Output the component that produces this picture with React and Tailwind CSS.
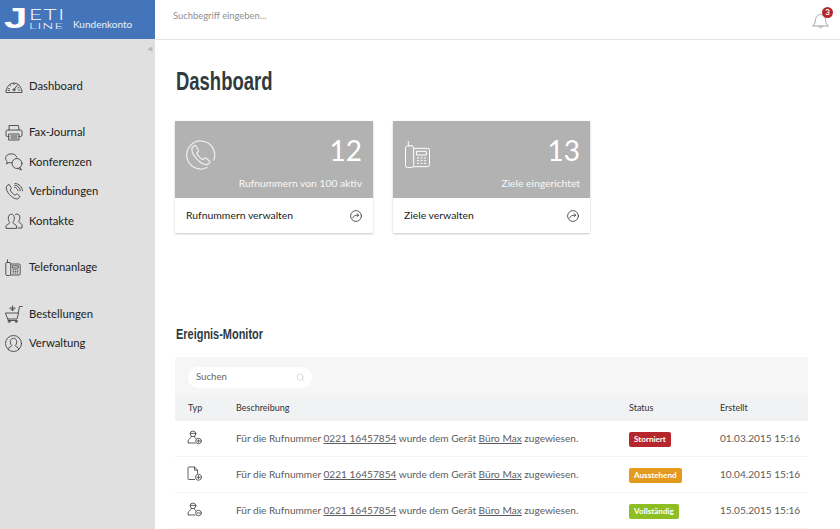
import { Search } from "lucide-react";

const Gauge = () => (
  <svg width="18" height="15" viewBox="0 0 18 15" fill="none" stroke="#444" strokeWidth="0.9" strokeLinecap="round" strokeLinejoin="round">
    <path d="M1.500 11.500a7.500 7.500 0 0 1 15 0" />
    <path d="M1 11.500v2h16v-2" />
    <path d="M9 10.500l3.500-4.500" />
    <path d="M3.500 9.500l1 .4M5 6l.8.7M9 4.500v1M13.800 8.500l-1 .5M14.500 11h-1M3.400 11.500h1" />
    <circle cx="9" cy="10.800" r="1" />
  </svg>
);

const Printer = () => (
  <svg width="18" height="17" viewBox="0 0 18 17" fill="none" stroke="#444" strokeWidth="0.9" strokeLinecap="round" strokeLinejoin="round">
    <path d="M4 6V1.500h9.500L14 6" />
    <path d="M4 12.500H2.500A1.500 1.500 0 0 1 1 11V7.500A1.500 1.500 0 0 1 2.500 6h13A1.500 1.500 0 0 1 17 7.500V11a1.500 1.500 0 0 1-1.500 1.500H14" />
    <path d="M4 10h10v6H4z" />
    <path d="M6 12h6M6 14h6" strokeWidth="1.200" />
  </svg>
);

const Bubbles = () => (
  <svg width="18" height="18" viewBox="0 0 18 18" fill="none" stroke="#444" strokeWidth="0.9" strokeLinecap="round" strokeLinejoin="round">
    <path d="M7 9.500c-1 .3-2 .3-3 0L1.500 11l.7-2.500C1 7.500.6 6.300.6 5.200.6 2.800 3 .8 6.200.8c2.700 0 4.900 1.300 5.600 3.300" />
    <circle cx="12" cy="10.500" r="5" />
    <path d="M15 14.500l1.500 2.500-3-1.200" />
  </svg>
);

const PhoneWaves = () => (
  <svg width="18" height="18" viewBox="0 0 18 18" fill="none" stroke="#444" strokeWidth="0.9" strokeLinecap="round" strokeLinejoin="round">
    <path d="M3.200 1.800L1.500 3.300c-.8 2 .3 5.300 3 8.300 2.800 3 5.900 4.700 8.300 4.300l1.800-1.700c.4-.4.3-.9 0-1.200l-2.200-1.800c-.4-.3-.8-.3-1.200 0l-1.100 1c-1.400-.4-4.400-3.400-5-5.200l1-1.200c.3-.3.3-.8 0-1.200L4.400 1.800c-.3-.4-.8-.4-1.200 0z" />
    <path d="M9.500 4.200c1.800.2 3.300 1.700 3.500 3.500M9.800 2.200c3 .2 5.300 2.600 5.500 5.500M10 .4c4 .2 7.200 3.400 7.500 7.300" />
  </svg>
);

const Contacts = () => (
  <svg width="18" height="16" viewBox="0 0 18 16" fill="none" stroke="#444" strokeWidth="0.9" strokeLinecap="round" strokeLinejoin="round">
    <path d="M1 15v-2c0-1.300 3.500-2 3.800-3.300C3.800 8.500 3.300 7.300 3.300 5c0-2.400 1.300-3.800 3-3.800s3 1.400 3 3.800c0 2.300-.5 3.500-1.500 4.700.3 1.300 3.700 2 3.700 3.300v2z" />
    <path d="M10.500 1.500c.5-.3 1-.5 1.500-.5 1.700 0 2.800 1.300 2.800 3.500 0 2-.5 3.200-1.300 4.200.3 1.200 3.500 1.800 3.500 3V15h-4" />
  </svg>
);

const DeskPhone = ({ w = 16, h = 18, color = "#444", sw = 0.9 }) => (
  <svg width={w} height={h} viewBox="0 0 16 18" fill="none" stroke={color} strokeWidth={sw} strokeLinecap="round" strokeLinejoin="round">
    <path d="M2.500 3.500V.8" />
    <path d="M4.500 3.500H2A1.200 1.200 0 0 0 .8 4.700v10.600A1.200 1.200 0 0 0 2 16.500h2.500A1.200 1.200 0 0 0 5.700 15.300V4.700a1.200 1.200 0 0 0-1.200-1.200z" />
    <path d="M5.700 5h8.300a1.200 1.200 0 0 1 1.200 1.200v8.600a1.200 1.200 0 0 1-1.200 1.200H5.700" />
    <path d="M7.700 6.800h5.600v2.200H7.700z" />
    <path d="M8 10.800h.7M10.100 10.800h.7M12.200 10.800h.7M8 12.400h.7M10.100 12.400h.7M12.200 12.400h.7M8 14h.7M10.100 14h.7M12.200 14h.7" />
  </svg>
);

const Cart = () => (
  <svg width="18" height="18" viewBox="0 0 18 18" fill="none" stroke="#444" strokeWidth="0.9" strokeLinecap="round" strokeLinejoin="round">
    <path d="M.8 8h12.700l-1.500 6H3z" />
    <path d="M13.300 8l1.200-6.500h2.800" />
    <path d="M7.500 1v4.500M5.500 3.800l2 2 2-2M5 3h5" />
    <path d="M3 14v1.500h9" />
    <circle cx="4.200" cy="16.500" r="1" />
    <circle cx="11.300" cy="16.500" r="1" />
  </svg>
);

const UserCircle = () => (
  <svg width="17" height="17" viewBox="0 0 17 17" fill="none" stroke="#444" strokeWidth="0.9" strokeLinecap="round" strokeLinejoin="round">
    <circle cx="8.500" cy="8.500" r="8" />
    <path d="M3.500 14.800v-1.300c0-1.200 3-1.800 3.300-2.800-1-1-1.500-2.200-1.500-4 0-2 1.300-3.400 3.200-3.400s3.200 1.400 3.200 3.400c0 1.800-.5 3-1.500 4 .3 1 3.300 1.600 3.300 2.800v1.300" />
  </svg>
);

const PhoneRound = () => (
  <svg width="30" height="30" viewBox="0 0 30 30" fill="none" stroke="#eee" strokeWidth="1.200" strokeLinecap="round" strokeLinejoin="round">
    <path d="M21 27.500A14 14 0 1 1 27.800 20" />
    <g transform="translate(-3.500 -3.500) scale(1.230)">
      <path d="M9.500 7.500L7.800 9c-.6 2 .3 5.200 3.500 9 3.400 3.700 6.600 5.300 9 4.800l1.600-1.600c.4-.4.4-1 0-1.300l-2.700-2.200c-.4-.3-.9-.3-1.300 0l-1.300 1.200c-1.500-.6-4.400-3.700-5-5.300l1.200-1.300c.3-.4.3-.9 0-1.300L10.800 7.500c-.4-.4-.9-.4-1.300 0z" strokeWidth="1" />
    </g>
  </svg>
);

const ArrowCircle = () => (
  <svg width="12" height="12" viewBox="0 0 12 12" fill="none" stroke="#333" strokeWidth="0.8" strokeLinecap="round" strokeLinejoin="round">
    <circle cx="6" cy="6" r="5.400" />
    <path d="M2.800 8c.3-1.800 1.500-2.800 5.700-2.800" />
    <path d="M7 3.700l1.800 1.500L7 6.700" />
  </svg>
);

const Bell = () => (
  <svg width="17" height="16" viewBox="0 0 17 16" fill="none" stroke="#9a9a9a" strokeWidth="0.9" strokeLinecap="round" strokeLinejoin="round">
    <path d="M.8 12.800c1.500-1 2.300-2.400 2.500-5C3.500 4.300 5.500 1.500 8.500 1.500s5 2.800 5.200 6.300c.2 2.600 1 4 2.500 5z" />
    <path d="M6.800 12.800c.2 1.400.9 2 1.700 2s1.500-.6 1.700-2" />
  </svg>
);

const TypeUser = ({ plus = true }) => (
  <svg width="16" height="16" viewBox="0 0 16 16" fill="none" stroke="#444" strokeWidth="0.85" strokeLinecap="round" strokeLinejoin="round">
    <circle cx="6" cy="3.800" r="2.800" />
    <path d="M3.200 3.400h5.600" />
    <path d="M4.600 6.500C4.600 8.200 1 9 1 11.200V13h7" />
    <path d="M7.400 6.500c0 1 .5 1.600 1.300 2.100" />
    <circle cx="11.500" cy="11" r="2.800" />
    {plus ? <path d="M11.500 9.700v2.600M10.200 11h2.600" /> : <path d="M10.200 11h2.600" />}
  </svg>
);

const TypeFile = () => (
  <svg width="16" height="16" viewBox="0 0 16 16" fill="none" stroke="#444" strokeWidth="0.85" strokeLinecap="round" strokeLinejoin="round">
    <path d="M7.500 13.500H1.700a.7.7 0 0 1-.7-.7V1.700A.7.7 0 0 1 1.700 1h5.800l3 3.200V7.500" />
    <path d="M7.500 1v3.200h3" />
    <circle cx="11.500" cy="11.300" r="3" />
    <path d="M11.500 9.800v3M10 11.300h3" />
  </svg>
);

const navGroups = [
  [{ label: "Dashboard", icon: <Gauge /> }],
  [
    { label: "Fax-Journal", icon: <Printer /> },
    { label: "Konferenzen", icon: <Bubbles /> },
    { label: "Verbindungen", icon: <PhoneWaves /> },
    { label: "Kontakte", icon: <Contacts /> },
  ],
  [{ label: "Telefonanlage", icon: <DeskPhone /> }],
  [
    { label: "Bestellungen", icon: <Cart /> },
    { label: "Verwaltung", icon: <UserCircle /> },
  ],
];

const events = [
  { icon: <TypeUser />, status: "Storniert", color: "bg-[#b5272d]", date: "01.03.2015 15:16" },
  { icon: <TypeFile />, status: "Ausstehend", color: "bg-[#e39a1f]", date: "10.04.2015 15:16" },
  { icon: <TypeUser plus={false} />, status: "Vollständig", color: "bg-[#8fbe22]", date: "15.05.2015 15:16" },
];

const StatCard = ({ icon, value, caption, action, width, pad }) => (
  <div className={`${width} bg-white shadow-[0_1px_2px_rgba(0,0,0,0.22)]`}>
    <div className={`h-[77px] bg-[#b2b2b2] pl-[11px] ${pad} flex justify-between text-white`}>
      <div className="pt-[19px]">{icon}</div>
      <div className="flex flex-col items-end">
        <div className="text-[28px] leading-[34px] mt-[12px]">{value}</div>
        <div className="text-[10.3px] leading-[14px] mt-[9px] text-white/90">{caption}</div>
      </div>
    </div>
    <div className="h-[35px] pl-[11px] pr-[11px] flex items-center justify-between text-[10.4px] text-[#222]">
      <span>{action}</span>
      <ArrowCircle />
    </div>
  </div>
);

export default function App() {
  return (
    <div className="h-[529px] w-[840px] overflow-hidden flex bg-white text-[#333] font-['Lato','Open_Sans',sans-serif]">
      <aside className="w-[155px] shrink-0 bg-[#e0e0e0] flex flex-col">
        <div className="h-[39px] bg-[#4475bb] pl-[4px] flex items-start text-white">
          <span className="font-['Liberation_Sans',sans-serif] font-bold text-[30px] leading-[35px] w-[17px] scale-x-[1.4] origin-left">J</span>
          <div className="flex flex-col ml-[8px] mt-[6px] w-[36px] leading-none">
            <span className="text-[16px] leading-[16px] font-light tracking-[1px] scale-x-[1.42] origin-left w-[25px]">ETI</span>
            <span className="text-[7px] leading-[7px] font-light tracking-[0.5px] scale-x-[2.1] origin-left w-[17px] mt-[1px]">LINE</span>
          </div>
          <span className="text-[10px] leading-[14px] mt-[17px] ml-[8px] text-white/90">Kundenkonto</span>
        </div>
        <div className="flex justify-end pr-[3px] pt-[5px] h-[20px] text-[7px] leading-[8px] text-[#bbb]">◀</div>
        <nav className="flex flex-col gap-[17px] pt-[12.25px]">
          {navGroups.map((group, i) => (
            <div key={i} className="flex flex-col">
              {group.map((item) => (
                <div key={item.label} className="h-[29.5px] flex items-center pl-[5px] text-[11.3px] text-[#222]">
                  <span className="w-[24px] flex items-center">{item.icon}</span>
                  {item.label}
                </div>
              ))}
            </div>
          ))}
        </nav>
      </aside>

      <div className="flex-1 min-w-0 flex flex-col">
        <header className="h-[40px] shrink-0 border-b border-[#e3e6e6] flex items-center justify-between pl-[18px] pr-[11px]">
          <span className="text-[9.400px] text-[#8f8f8f] mb-[6px]">Suchbegriff eingeben...</span>
          <div className="relative mt-[2px]">
            <Bell />
            <span className="absolute -top-[6px] right-[-4px] w-[11px] h-[11px] rounded-full bg-[#b5272d] text-white text-[8px] font-bold leading-[11px] text-center">3</span>
          </div>
        </header>

        <main className="pl-[20px] pr-[32px] flex-1 min-h-0">
          <h1 className="ml-[1px] mt-[26px] text-[26px] leading-[30px] font-bold text-[#2f3a40] font-['Liberation_Sans',sans-serif] scale-x-[0.71] origin-left w-[140px]">Dashboard</h1>

          <div className="flex gap-[20px] mt-[25px]">
            <StatCard width="w-[198px]" pad="pr-[11px]" icon={<PhoneRound />} value="12" caption="Rufnummern von 100 aktiv" action="Rufnummern verwalten" />
            <StatCard width="w-[197px]" pad="pr-[10px]" icon={<DeskPhone w={27} h={30} color="#fff" sw={0.6} />} value="13" caption="Ziele eingerichtet" action="Ziele verwalten" />
          </div>

          <h2 className="ml-[1px] mt-[91px] text-[15px] leading-[20px] font-bold text-[#2f3a40] font-['Liberation_Sans',sans-serif] scale-x-[0.73] origin-left w-[122px]">Ereignis-Monitor</h2>

          <section className="mt-[13px] text-[10.100px]">
            <div className="h-[38px] bg-[#f6f6f6] pl-[13px] pt-[2px] flex items-center rounded-t-[2px]">
              <div className="w-[124px] h-[21px] bg-white rounded-full pl-[8px] pr-[7px] flex items-center justify-between text-[#666] text-[9.600px]">
                <span>Suchen</span>
                <Search size={9} strokeWidth={1} className="text-[#aaa]" />
              </div>
            </div>
            <div className="h-[26px] bg-[#f1f2f3] pl-[13px] flex items-center text-[#333] text-[9px]">
              <span className="w-[48px]">Typ</span>
              <span className="w-[393px]">Beschreibung</span>
              <span className="w-[91px]">Status</span>
              <span>Erstellt</span>
            </div>
            {events.map((e) => (
              <div key={e.date} className="h-[36px] pl-[13px] pt-[1px] flex items-center border-b border-[#f3f3f3] text-[#5c5c5c]">
                <span className="w-[48px] flex -ml-[1px] pr-[1px] mt-[-3px]">{e.icon}</span>
                <span className="w-[393px] ml-[1px]">
                  Für die Rufnummer <u>0221 16457854</u> wurde dem Gerät <u>Büro Max</u> zugewiesen.
                </span>
                <span className="w-[91px] flex">
                  <span className={`${e.color} text-white font-bold text-[8.100px] leading-[15px] px-[5px] rounded-[2px]`}>{e.status}</span>
                </span>
                <span>{e.date}</span>
              </div>
            ))}
          </section>
        </main>
      </div>
    </div>
  );
}
